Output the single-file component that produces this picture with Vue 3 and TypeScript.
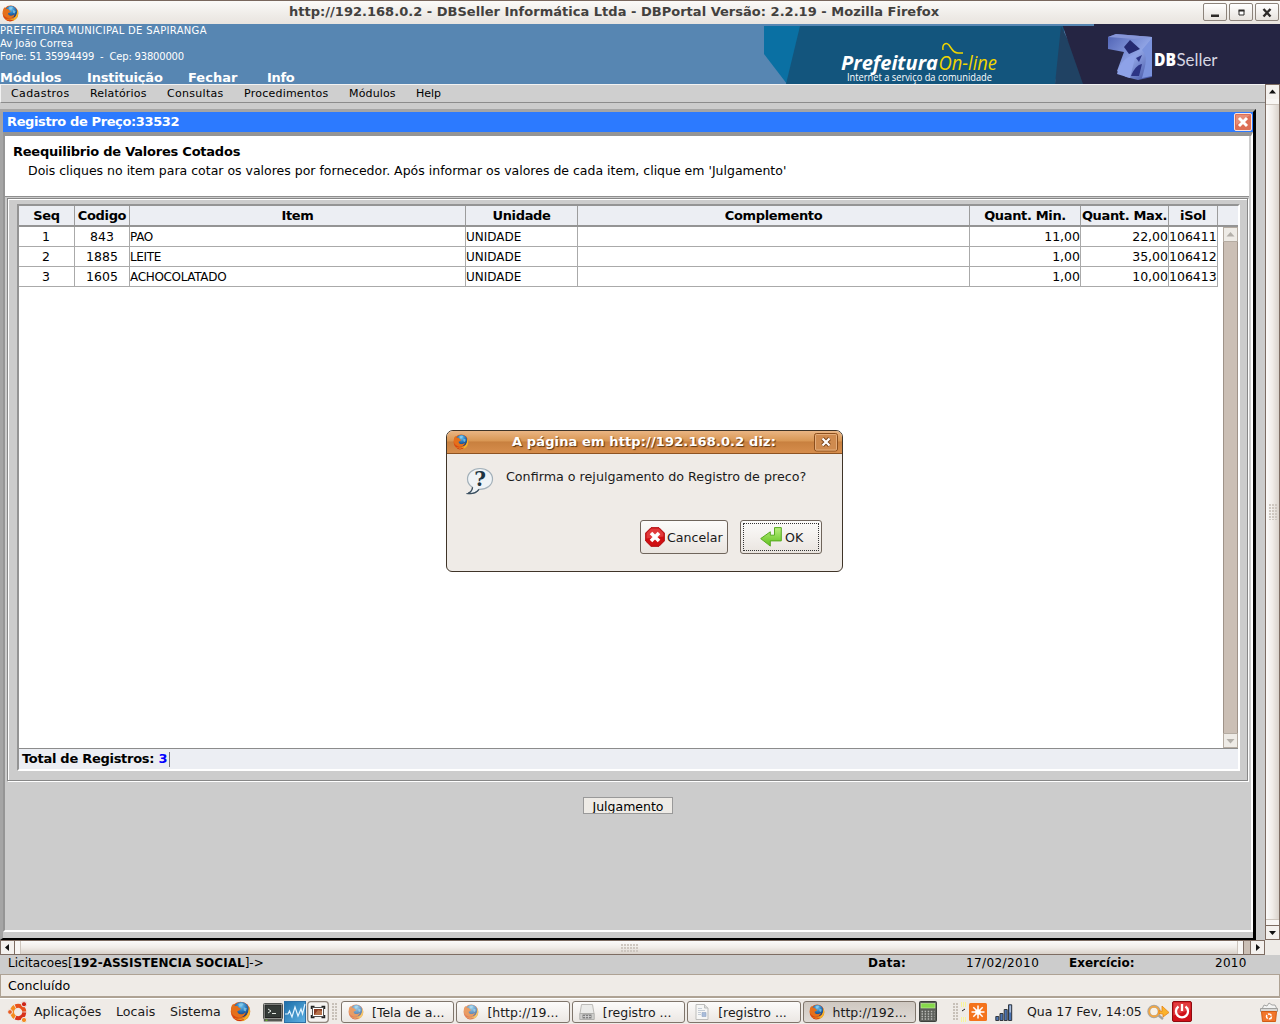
<script setup lang="ts">
interface Column { label: string; cls: string }
interface Row { seq: number; codigo: number; item: string; unidade: string; min: string; max: string; isol: string }
interface Task { label: string; icon: string; state: string }

const modules: string[] = ['Módulos', 'Instituição', 'Fechar', 'Info']
const menus: string[] = ['Cadastros', 'Relatórios', 'Consultas', 'Procedimentos', 'Módulos', 'Help']

const columns: Column[] = [
  { label: 'Seq', cls: 'h-seq' },
  { label: 'Codigo', cls: 'h-cod' },
  { label: 'Item', cls: 'h-item' },
  { label: 'Unidade', cls: 'h-uni' },
  { label: 'Complemento', cls: 'h-comp' },
  { label: 'Quant. Min.', cls: 'h-min' },
  { label: 'Quant. Max.', cls: 'h-max' },
  { label: 'iSol', cls: 'h-isol' },
]

const rows: Row[] = [
  { seq: 1, codigo: 843, item: 'PAO', unidade: 'UNIDADE', min: '11,00', max: '22,00', isol: '106411' },
  { seq: 2, codigo: 1885, item: 'LEITE', unidade: 'UNIDADE', min: '1,00', max: '35,00', isol: '106412' },
  { seq: 3, codigo: 1605, item: 'ACHOCOLATADO', unidade: 'UNIDADE', min: '1,00', max: '10,00', isol: '106413' },
]

const tasks: Task[] = [
  { label: '[Tela de a...', icon: '#i-firefox', state: 'faded' },
  { label: '[http://19...', icon: '#i-firefox', state: 'faded' },
  { label: '[registro ...', icon: '#i-drive', state: 'idle' },
  { label: '[registro ...', icon: '#i-doc', state: 'idle' },
  { label: 'http://192...', icon: '#i-firefox', state: 'active' },
]
</script>

<template>
  <div class="screen">
    <svg class="defs" width="0" height="0">
      <defs>
        <radialGradient id="g-globe" cx=".5" cy=".25" r=".7">
          <stop offset="0" stop-color="#6fc4ee" /><stop offset=".55" stop-color="#2471b4" /><stop offset="1" stop-color="#173a78" />
        </radialGradient>
        <linearGradient id="g-fox" x1="0" y1="0" x2="1" y2="1">
          <stop offset="0" stop-color="#e8701a" /><stop offset=".5" stop-color="#d8420f" /><stop offset="1" stop-color="#f5c22b" />
        </linearGradient>
        <linearGradient id="g-green" x1="0" y1="0" x2="0" y2="1">
          <stop offset="0" stop-color="#b9ee7c" /><stop offset="1" stop-color="#5fc11d" />
        </linearGradient>
        <linearGradient id="g-blue" x1="0" y1="0" x2="1" y2="1">
          <stop offset="0" stop-color="#1d6ea8" /><stop offset="1" stop-color="#5fb2e4" />
        </linearGradient>
        <linearGradient id="g-cube" x1="0" y1="0" x2="1" y2="1">
          <stop offset="0" stop-color="#4f62b4" /><stop offset=".55" stop-color="#8fa3e4" /><stop offset="1" stop-color="#3c4d9e" />
        </linearGradient>
        <symbol id="i-firefox" viewBox="0 0 20 20">
          <circle cx="10" cy="10" r="9.3" fill="url(#g-fox)" />
          <circle cx="10.6" cy="8.2" r="7.2" fill="url(#g-globe)" />
          <path d="M8 3c2-1.500 4-1 5 0l-2 2-2 .5zM13 6l3 1-1 3-2-1z" fill="#8fd0ee" opacity=".7" />
          <path d="M1 8C1 5 2 3.500 3.200 2.500l.8 2 3 .3 1.500 1.700 2 .6-1.500 1.800-2 .8c.2 2.600 2.800 3.600 6 2.400l2-1.300c-1 4-4 5-7 4.700C3.500 15 1 12 1 8z" fill="#e5701b" />
          <path d="M18 5c2 5 .7 10-3.500 12.500C11 20 5 19 3 15.500c4 3 9 2.500 12-.5 2.300-2.500 3-6 3-10z" fill="#f6b52c" />
          <path d="M3 15.500c3 3 8 3 11 1.500-2 2.600-8 3.200-11-1.500z" fill="#c92a12" />
        </symbol>
        <symbol id="i-drive" viewBox="0 0 16 16">
          <path d="M2.500.5h11l1.500 9H1z" fill="#ebebe9" stroke="#bcbbb8" />
          <path d="M.8 9.500h14.400v6H.8z" fill="#cfcfcd" stroke="#b0b0ad" />
          <path d="M3.500 10.500h9v4h-9z" fill="#808080" /><path d="M4 12.500h8M6.500 11v3.500M9.500 11v3.500" stroke="#d6d6d6" stroke-width=".8" />
        </symbol>
        <symbol id="i-doc" viewBox="0 0 16 16">
          <path d="M2 .5h8.500L14 4v11.500H2z" fill="#f6f6f5" stroke="#bdbdbb" /><path d="M10.500.5V4H14" fill="#ddd" stroke="#bdbdbb" />
          <path d="M4 4.500h4M4 6.500h7M4 8.500h3M4 10.500h3" stroke="#c5cdd6" /><path d="M8 8.500h4v4H8z" fill="#a9bddb" stroke="#92a5c2" stroke-width=".6" />
        </symbol>
      </defs>
    </svg>

    <!-- browser title bar -->
    <header class="titlebar">
      <svg class="fx16" width="17" height="17"><use href="#i-firefox" /></svg>
      <span class="title">http://192.168.0.2 - DBSeller Informática Ltda - DBPortal Versão: 2.2.19 - Mozilla Firefox</span>
      <div class="winbtns">
        <span class="wb"><svg width="22" height="17"><path d="M7 10.500h8v2.500H7z" fill="#2d2a28" /></svg></span>
        <span class="wb"><svg width="22" height="17"><path d="M9 6.500h5v4.500H9z" fill="#fff" stroke="#2d2a28" stroke-width="1" /><path d="M8.500 6.500h6" stroke="#2d2a28" stroke-width="2" /></svg></span>
        <span class="wb"><svg width="22" height="17"><path d="M7.500 5l7 7.500M14.500 5l-7 7.500" stroke="#2d2a28" stroke-width="2.400" /></svg></span>
      </div>
    </header>

    <!-- portal header -->
    <section class="portal">
      <div class="org">
        <div class="org-line l1">PREFEITURA MUNICIPAL DE SAPIRANGA</div>
        <div class="org-line l2">Av João Correa</div>
        <div class="org-line l3">Fone: 51 35994499 &nbsp;- &nbsp;Cep: 93800000</div>
        <nav class="mods"><span v-for="(m, i) in modules" :key="m" :class="'m' + i">{{ m }}</span></nav>
      </div>
      <svg class="banner" width="516" height="60" viewBox="0 0 516 60">
        <path d="M0 2h37L23 60 0 30z" fill="#0a70a3" />
        <path d="M36 2h265l-10 58H22z" fill="#13557d" />
        <path d="M297 2l-6 58h35z" fill="#204263" />
        <path d="M298 0h218v60H319z" fill="#252543" />
        <path d="M0 0h330v2H0z" fill="#5786b2" />
        <g>
          <path d="M344 13l8-3 36 3v40l-14 3-12-3-9-6 7-19-16-3z" fill="url(#g-cube)" />
          <path d="M344 13l8-3 36 3-18 2z" fill="#8796d8" />
          <path d="M360 23l6-7 10 9-11 5z" fill="#252a70" />
          <path d="M388 14v38l-10 2c4-14 6-22 0-28z" fill="#7b93dd" />
          <path d="M353 50c3-12 9-17 19-20l-6 24z" fill="#8ea2e8" />
          <path d="M367 52c3-7 6-11 11-12l-3 12zM372 34l6-3-3 7z" fill="#2c3485" />
        </g>
        <text x="390" y="42" class="db" textLength="22" lengthAdjust="spacingAndGlyphs">DB</text>
        <text x="412.5" y="42" class="seller" textLength="41" lengthAdjust="spacingAndGlyphs">Seller</text>
        <text x="77" y="45.5" class="pref" textLength="97" lengthAdjust="spacingAndGlyphs">Prefeitura</text>
        <text x="174.5" y="45.5" class="online" textLength="58.5" lengthAdjust="spacingAndGlyphs">On-line</text>
        <path d="M179 26c-1-6 3-8 6-5 3 4 4 8 9 8h5" fill="none" stroke="#f0d500" stroke-width="1.500" />
        <text x="83" y="57" class="slogan" textLength="145" lengthAdjust="spacingAndGlyphs">Internet a serviço da comunidade</text>
      </svg>
    </section>

    <div class="viewport">
      <div class="page">
        <nav class="menubar"><span v-for="(m, i) in menus" :key="m" :class="'n' + i">{{ m }}</span></nav>

        <main class="window">
          <div class="win-title">
            <span>Registro de Preço:33532</span>
            <svg width="18" height="18" viewBox="0 0 18 18"><rect x=".5" y=".5" width="17" height="17" rx="1.500" fill="#dd6f56" stroke="#fbe4dc" /><path d="M2 2h14l-14 10z" fill="#eda48f" opacity=".6" /><path d="M5 5l8 8M13 5l-8 8" stroke="#fff" stroke-width="3" /></svg>
          </div>
          <div class="win-body">
            <div class="intro">
              <h1>Reequilibrio de Valores Cotados</h1>
              <p>Dois cliques no item para cotar os valores por fornecedor. Após informar os valores de cada item, clique em 'Julgamento'</p>
            </div>
            <div class="fieldset">
              <div class="grid">
                <div class="ghead">
                  <span v-for="c in columns" :key="c.label" class="cell" :class="c.cls"><b>{{ c.label }}</b></span>
                </div>
                <div class="gbody">
                  <div class="grows">
                    <div v-for="r in rows" :key="r.seq" class="grow">
                      <span class="cell h-seq num">{{ r.seq }}</span>
                      <span class="cell h-cod num">{{ r.codigo }}</span>
                      <span class="cell h-item left name">{{ r.item }}</span>
                      <span class="cell h-uni left">{{ r.unidade }}</span>
                      <span class="cell h-comp"></span>
                      <span class="cell h-min right num">{{ r.min }}</span>
                      <span class="cell h-max right num">{{ r.max }}</span>
                      <span class="cell h-isol left num">{{ r.isol }}</span>
                    </div>
                  </div>
                  <div class="gscroll">
                    <svg width="15" height="15"><rect x=".5" y=".5" width="14" height="14" fill="#eeebe6" stroke="#b5aca2" /><path d="M3.500 9.500h8L7.500 5z" fill="#b3afa9" /></svg>
                    <div class="gtrack"></div>
                    <svg width="15" height="15"><rect x=".5" y=".5" width="14" height="14" fill="#eeebe6" stroke="#b5aca2" /><path d="M3.500 6h8L7.500 10.500z" fill="#b3afa9" /></svg>
                  </div>
                </div>
                <div class="gfoot"><b>Total de Registros: <i>3</i></b><span class="caret"></span></div>
              </div>
            </div>
            <button class="julg">Julgamento</button>
          </div>
        </main>
      </div>

      <div class="vscroll">
        <svg width="15" height="15"><rect x=".5" y=".5" width="14" height="15" fill="#f4f1ee" stroke="#7d6c62" /><path d="M4 9.500h7L7.500 5.500z" fill="#111" /></svg>
        <div class="vthumb"><span class="vend"></span><span class="vgrip"></span><span class="vend bottom"></span></div>
        <svg width="15" height="15"><rect x=".5" y=".5" width="14" height="14" fill="#f4f1ee" stroke="#7d6c62" /><path d="M4 6h7L7.500 10z" fill="#111" /></svg>
      </div>
    </div>

    <div class="hscroll">
      <svg width="15" height="15"><rect x=".5" y=".5" width="14" height="14" fill="#f4f1ee" stroke="#7d6c62" /><path d="M9 4v7L5 7.500z" fill="#111" /></svg>
      <div class="hthumb"><span class="hend"></span><span class="hgrip"></span><span class="hend r"></span></div>
      <div class="htrack"></div>
      <svg width="15" height="15"><rect x=".5" y=".5" width="14" height="14" fill="#f4f1ee" stroke="#7d6c62" /><path d="M6 4v7L10 7.500z" fill="#111" /></svg>
      <div class="corner"></div>
    </div>

    <div class="infobar">
      <span class="path">Licitacoes[<b>192-ASSISTENCIA SOCIAL</b>]-&gt;</span>
      <b class="k-data">Data:</b><span class="v-data">17/02/2010</span>
      <b class="k-ex">Exercício:</b><span class="v-ex">2010</span>
    </div>

    <div class="statusbar">Concluído</div>

    <!-- desktop panel -->
    <footer class="panel">
      <svg class="ubuntu" width="22" height="22" viewBox="0 0 22 22">
        <g fill="none" stroke-width="4">
          <path d="M8.500 5.400A6.200 6.200 0 0 1 17.300 10.600" stroke="#e8501c" /><path d="M17.300 11.400A6.200 6.200 0 0 1 8.500 16.600" stroke="#d8321a" /><path d="M7.800 16.200A6.200 6.200 0 0 1 7.800 5.800" stroke="#f58a1f" />
        </g>
        <circle cx="3" cy="11" r="2.400" fill="#e95a20" stroke="#efebe7" /><circle cx="17" cy="3.200" r="2.600" fill="#cd2418" stroke="#efebe7" /><circle cx="17" cy="19" r="2.600" fill="#f48a22" stroke="#efebe7" />
      </svg>
      <span class="pm p0">Aplicações</span><span class="pm p1">Locais</span><span class="pm p2">Sistema</span>
      <svg class="fx20" width="21" height="21"><use href="#i-firefox" /></svg>
      <svg class="q-term" width="20" height="19" viewBox="0 0 20 19"><rect x=".5" y=".5" width="19" height="15.500" rx="1" fill="#d6d8d3" stroke="#50524f" /><rect x="2" y="2" width="16" height="12.500" fill="#343a37" stroke="#222" /><path d="M5 6l3 2-3 2M9 10.500h4" stroke="#e6ece6" fill="none" /><path d="M.8 16h18.400v2.500H.8z" fill="#555753" /><path d="M2.500 17.200h2" stroke="#73d216" /></svg>
      <svg class="q-mon" width="22" height="22" viewBox="0 0 22 22"><rect x=".5" y=".5" width="21" height="21" fill="url(#g-blue)" stroke="#2c6fa5" /><path d="M1 13h3l1.500-3 2.500 6 3-10 3 9 3-7 1.500 5 2.500-10" fill="none" stroke="#e4f4ff" stroke-width="1.200" /></svg>
      <svg class="q-shot" width="22" height="22" viewBox="0 0 22 22"><rect x=".7" y=".7" width="20.600" height="20.600" rx="3" fill="#f5f3f1" stroke="#8f857c" stroke-width="1.300" /><path d="M4.500 8V5.500h3M14.500 5.500h3V8M4.500 14v2.500h3M14.500 16.500h3V14" fill="none" stroke="#222" stroke-width="1.500" /><rect x="5.500" y="6.500" width="11" height="9" fill="#fff" stroke="#555" /><rect x="7" y="8" width="8" height="6" fill="#8a3b22" /><path d="M7 14l4-5 4 1v4z" fill="#b5714b" /></svg>
      <span class="grip g1"></span>
      <div class="tasks">
        <div v-for="(t, i) in tasks" :key="i" class="task" :class="t.state">
          <svg width="16" height="16"><use :href="t.icon" /></svg><span>{{ t.label }}</span>
        </div>
      </div>
      <svg class="calc" width="20" height="22" viewBox="0 0 20 22"><rect x="1.500" y=".5" width="17" height="20" rx="1" fill="#5c5e59" stroke="#3e403c" /><rect x="3" y="2.500" width="14" height="4.500" fill="#86d94a" stroke="#c7f2a0" stroke-width=".6" /><g stroke="#b9bab6" stroke-width="1.300" stroke-dasharray="1.500 1.600"><path d="M3.500 10.500h13M3.500 13h13M3.500 15.500h13M3.500 18h13" /></g></svg>
      <span class="grip g2"></span>
      <svg class="net" width="5" height="20" viewBox="0 0 5 20"><path d="M.5 0v5M2.500 0v5M4.500 0v5M.5 15v5M2.500 15v5M4.500 15v5" stroke="#f8f49a" /><path d="M1 9l3-2" stroke="#222" /></svg>
      <svg class="upd" width="18" height="18" viewBox="0 0 18 18"><rect width="18" height="18" rx="1.500" fill="#f4731c" /><path d="M9 2.500v13M2.500 9h13M4.300 4.300l9.400 9.400M13.700 4.300l-9.400 9.400" stroke="#fff" stroke-width="1.500" /><circle cx="9" cy="9" r="2.800" fill="#fff" /></svg>
      <svg class="sig" width="18" height="17" viewBox="0 0 18 17"><g fill="#4a73b3" stroke="#33383f"><path d="M.8 12.500h3v4h-3zM5 9.500h3v7H5zM9.200 5.500h3v11h-3zM13.500.8h3.200v15.700h-3.200z" /></g><path d="M14.500 1.500h1.500v7h-1.500z" fill="#a9bddb" /></svg>
      <span class="clock">Qua 17 Fev, 14:05</span>
      <svg class="key" width="23" height="16" viewBox="0 0 23 16"><path d="M11 11l5 4" stroke="#a5a19a" stroke-width="2.500" /><circle cx="7" cy="7.500" r="5.200" fill="#f8f1e6" stroke="#aba69e" stroke-width="3" /><circle cx="7" cy="7.500" r="4.900" fill="none" stroke="#f7a63c" stroke-width="1.600" /><path d="M12 6.500l3 1V2l7 6.500-6 4.500v-3l-4-.5z" fill="#fbb32b" stroke="#e78311" stroke-width=".8" /></svg>
      <svg class="power" width="20" height="21" viewBox="0 0 20 21"><rect x=".5" y=".5" width="19" height="20" rx="1.500" fill="#d01018" stroke="#8f0b10" /><path d="M1.500 1.500h17v7l-17 6z" fill="#ec5a5a" opacity=".6" /><path d="M6.500 5.500a6 6 0 1 0 7 0M10 3v7" fill="none" stroke="#fff" stroke-width="2.300" /></svg>
      <svg class="trash" width="18" height="20" viewBox="0 0 18 20"><path d="M2 7l2-4 3 1 2-3 3 2 3 0 2 4z" fill="#f3f3f2" stroke="#a5a5a3" /><path d="M.5 6.500h17v3H.5z" fill="#d7d7d5" stroke="#a0a09e" /><path d="M1.500 9.500h15L15.500 19.500h-13z" fill="#f2762b" stroke="#d15c15" /><circle cx="9" cy="14.500" r="2.500" fill="none" stroke="#fff" stroke-width="1.500" stroke-dasharray="4 1.200" /></svg>
    </footer>

    <!-- confirmation dialog -->
    <div class="dialog">
      <div class="d-title">
        <svg width="16" height="16"><use href="#i-firefox" /></svg>
        <span>A página em http://192.168.0.2 diz:</span>
        <svg class="d-close" width="24" height="19" viewBox="0 0 24 19"><rect x=".5" y=".5" width="23" height="17.500" rx="2" fill="#cf8b4f" stroke="#8a4e1d" /><rect x="1.500" y="1.500" width="21" height="15.500" rx="1" fill="none" stroke="#e5ae7c" /><path d="M8.500 5.500l7 7M15.500 5.500l-7 7" stroke="#7a441a" stroke-width="4" /><path d="M8.500 5.500l7 7M15.500 5.500l-7 7" stroke="#fff" stroke-width="2.200" /></svg>
      </div>
      <div class="d-msg">
        <svg width="28" height="29" viewBox="0 0 28 29">
          <path d="M14 1.500C7 1.500 1.500 6 1.500 12c0 3.500 2 6.500 5 8.300C6.500 23 5 25 2 26.500c5 .5 9-1.500 11-4.200 8 .3 13.500-4.300 13.500-10.300S21 1.500 14 1.500z" fill="#eff3f6" stroke="#a3b0b9" stroke-width="1.200" />
          <path d="M6.500 20.300C6.500 23 5 25 2 26.500c5 .5 9-1.500 11-4.200" fill="none" stroke="#3c5060" stroke-width="1.300" />
          <text x="14" y="19" class="qm">?</text>
        </svg>
        <p>Confirma o rejulgamento do Registro de preco?</p>
      </div>
      <div class="d-btns">
        <button class="d-btn cancel">
          <svg width="20" height="20" viewBox="0 0 20 20"><path d="M6 .7h8L19.300 6v8L14 19.300H6L.7 14V6z" fill="#d00f13" stroke="#b00509" /><path d="M6.300 1.500h7.400L18.500 6.300v3.200l-17 2V6.300z" fill="#e95152" opacity=".65" /><path d="M6 6l8 8M14 6l-8 8" stroke="#fff" stroke-width="3.600" /></svg>
          <span>Cancelar</span>
        </button>
        <button class="d-btn ok">
          <svg width="22" height="20" viewBox="0 0 22 20"><path d="M14.500.6h6.800v13.300h-11v5.200L.7 11.600l9.600-6.800v3.400h4.200z" fill="url(#g-green)" stroke="#58aa22" stroke-linejoin="round" /></svg>
          <span>OK</span>
        </button>
      </div>
    </div>
  </div>
</template>

<style>
html, body { margin: 0; overflow: hidden; }
</style>

<style scoped>
.screen { position: relative; width: 1280px; height: 1024px; overflow: hidden; display: flex; flex-direction: column; background: #ccc; color: #000; font: 13px/16px "DejaVu Sans", sans-serif; }
.screen * { box-sizing: border-box; }
svg { display: block; flex: none; }
.defs { position: absolute; }
span, b, p, h1, div { white-space: nowrap; }

.titlebar { height: 24px; flex: none; display: flex; align-items: flex-start; border-top: 1px solid #79675d; background: linear-gradient(#fbfaf8, #efece8 60%, #e9e4df); padding: 0 1px 0 2px; }
.fx16 { margin-top: 4px; }
.title { flex: 1; margin-left: 270px; margin-top: 3px; font-weight: bold; font-size: 13px; letter-spacing: 0.020px; color: #43413e; }
.winbtns { display: flex; gap: 2px; margin-top: 2px; }
.wb { width: 24px; height: 18px; border: 1px solid #8c837b; border-radius: 2px; background: linear-gradient(#fff, #e7e3de); }

.portal { height: 60px; flex: none; display: flex; justify-content: space-between; background: #5786b2; color: #fff; }
.org-line { font-size: 10px; line-height: 13px; }
.l1 { letter-spacing: 0.310px; }
.l3 { letter-spacing: -0.190px; }
.mods { display: flex; font-weight: bold; font-size: 13px; line-height: 16px; margin-top: 7px; }
.m0 { width: 87px; } .m1 { width: 101px; letter-spacing: -0.200px; } .m2 { width: 79px; } .m3 { letter-spacing: -0.300px; }
.banner text { font-family: "Open Sans", sans-serif; fill: #fff; }
.banner .db { font-size: 18px; font-weight: 800; }
.banner .seller { font-family: Lato, sans-serif; font-size: 18px; font-weight: 400; fill: #d6d6e2; }
.banner .pref { font-size: 20px; font-weight: 700; font-style: italic; }
.banner .online { font-size: 20px; font-style: italic; fill: #f0d500; }
.banner .slogan { font-size: 10px; }

.viewport { height: 856px; flex: none; display: flex; }
.page { width: 1265px; display: flex; flex-direction: column; background: #ccc; }
.menubar { height: 19px; flex: none; display: flex; font-size: 11px; line-height: 17px; background: #cfcfcf; border: 1px solid #f2f2f2; border-right: 0; border-bottom-color: #8c8c8c; padding-left: 10px; }
.n0 { width: 79px; letter-spacing: 0.400px; } .n1 { width: 77px; letter-spacing: 0.180px; } .n2 { width: 77px; letter-spacing: 0.300px; }
.n3 { width: 105px; letter-spacing: 0.230px; } .n4 { width: 67px; letter-spacing: 0.150px; }
.window { width: 1256px; height: 831px; margin-top: 6px; display: flex; flex-direction: column; border: 3px solid; border-color: #a5a5a5 #000 #000 #a5a5a5; border-bottom-width: 2px; }
.win-title { height: 20px; flex: none; display: flex; justify-content: space-between; align-items: center; background: #2c7aff; color: #fff; font-weight: bold; letter-spacing: -0.380px; padding: 0 1px 0 4px; }
.win-body { height: 800px; flex: none; display: flex; flex-direction: column; border: 2px solid; border-color: #959595 #fff #fff #959595; border-top-width: 4px; background: #ccc; }
.intro { width: 1244px; height: 61px; flex: none; background: #fff; border-bottom: 1px solid #8f8f8f; padding: 7px 8px 0; }
.intro h1 { margin: 0; font-size: 13px; line-height: 17px; font-weight: bold; letter-spacing: -0.230px; }
.intro p { margin: 3px 0 0 15px; font-size: 12.500px; line-height: 15px; }
.fieldset { width: 1241px; height: 583px; flex: none; margin: 1px 0 0 2px; border: 1px solid #888; box-shadow: inset 1px 1px 0 #fff, 1px 1px 0 #fff; padding: 5px 8px 0 9px; }
.grid { width: 1223px; height: 567px; display: flex; flex-direction: column; border: 2px solid; border-color: #949494 #fff #fff #949494; background: #fff; }
.ghead { height: 21px; flex: none; display: flex; background: #eceef3; border-bottom: 2px solid #949494; letter-spacing: -0.350px; }
.cell { flex: none; overflow: hidden; text-align: center; border-right: 1px solid #9c9c9c; height: 100%; }
.ghead .cell { line-height: 19px; }
.h-seq { width: 56px; } .h-cod { width: 55px; } .h-item { width: 336px; } .h-uni { width: 112px; } .h-comp { width: 392px; }
.h-min { width: 111px; } .h-max { width: 88px; } .h-isol { width: 49px; }
.gbody { flex: 1; display: flex; justify-content: space-between; }
.grows { width: 1199px; }
.grow { height: 20px; display: flex; border-bottom: 1px solid #aaa; font-size: 12px; line-height: 21px; }
.grow .cell { border-color: #aaa; }
.grow .h-seq { padding-right: 1px; }
.grow .num { font-size: 12.500px; line-height: 19px; }
.name { letter-spacing: -0.330px; }
.left { text-align: left; } .right { text-align: right; }
.gscroll { width: 15px; display: flex; flex-direction: column; }
.gtrack { flex: 1; background: #cbbfb5; border: solid #9f9389; border-width: 0 1px; }
.gfoot { height: 21px; flex: none; display: flex; align-items: center; background: #eceef3; border-top: 1px solid #8c8c8c; padding-left: 3px; letter-spacing: -0.280px; }
.gfoot i { color: #00f; font-style: normal; }
.caret { width: 1px; height: 15px; background: #777; margin-left: 2px; }
.julg { width: 90px; height: 17px; margin: 16px 0 0 578px; padding: 1px 0 0; flex: none; border: 1px solid #999; background: #eeebe6; font: 12.500px/15px "DejaVu Sans", sans-serif; overflow: hidden; color: #000; }

.vscroll { width: 15px; display: flex; flex-direction: column; }
.vthumb { flex: 1; display: flex; flex-direction: column; justify-content: space-between; align-items: center; border: solid #7d6c62; border-width: 0 1px; background: linear-gradient(90deg, #fcfbfa, #f0ece8 50%, #d9d2cb); }
.vend { width: 100%; height: 6px; background: #f8f6f4; border-bottom: 1px solid #cdc5bd; }
.vend.bottom { border-bottom: 0; border-top: 1px solid #cdc5bd; }
.vgrip { width: 8px; height: 16px; background: radial-gradient(circle at 1px 1px, #cdc6bf 0.700px, transparent 1px) 0 0 / 3px 3px; }
.hscroll { height: 15px; flex: none; display: flex; background: #eeebe7; }
.hthumb { width: 1229px; display: flex; justify-content: space-between; align-items: center; border: solid #7d6c62; border-width: 1px 1px 1px 0; background: linear-gradient(#fcfbfa, #f0ece8 50%, #d9d2cb); }
.hend { width: 6px; height: 100%; background: #f8f6f4; border-right: 1px solid #cdc5bd; }
.hend.r { border-right: 0; border-left: 1px solid #cdc5bd; }
.hgrip { width: 17px; height: 8px; background: radial-gradient(circle at 1px 1px, #cdc6bf 0.700px, transparent 1px) 0 0 / 3px 3px; }
.htrack { width: 6px; background: #cbbfb5; border: solid #7d6c62; border-width: 1px 0; }
.corner { flex: 1; }

.infobar { height: 19px; flex: none; display: flex; font-size: 12px; line-height: 16px; padding-left: 8px; background: #ccc; }
.path { width: 860px; letter-spacing: 0.030px; }
.k-data { width: 98px; letter-spacing: 0.300px; } .v-data { width: 103px; letter-spacing: 0.400px; } .k-ex { width: 146px; } .v-ex { letter-spacing: 0.300px; }
.statusbar { height: 24px; flex: none; border: 1px solid #aea294; border-bottom-width: 2px; background: #efebe7; padding-left: 7px; font-size: 12.600px; line-height: 22px; }

.panel { height: 26px; flex: none; display: flex; align-items: flex-start; border-top: 1px solid #fff; background: #efebe7; color: #1a1a1a; font-size: 12.600px; line-height: 26px; }
.ubuntu { margin: 2px 0 0 7px; }
.p0 { margin-left: 5px; width: 82px; } .p1 { width: 54px; } .p2 { width: 60px; }
.fx20 { margin-top: 2px; }
.q-term { margin: 4px 0 0 12px; } .q-mon { margin: 2px 0 0 1px; } .q-shot { margin: 2px 0 0 1px; }
.grip { flex: none; width: 6px; height: 18px; margin-top: 4px; background: radial-gradient(circle at 1px 1px, #c6bfb8 0.700px, transparent 1px) 0 0 / 3px 3px; }
.g1 { margin-left: 3px; }
.tasks { display: flex; gap: 2px; margin: 2px 0 0 3px; }
.task { width: 113.400px; height: 22px; flex: none; display: flex; align-items: center; gap: 8px; padding-left: 6px; border: 1px solid #7f756b; border-radius: 3px; background: linear-gradient(#fcfbfa, #ebe7e3); font-size: 12.500px; line-height: 21px; }
.faded svg { opacity: .65; }
.task.active { background: linear-gradient(#cfc8c1, #dfdad5); padding-left: 5px; }
.calc { margin: 2px 0 0 2px; }
.g2 { margin-left: 15px; }
.net { margin: 3px 0 0 2px; } .upd { margin: 4px 0 0 3px; } .sig { margin: 5px 0 0 8px; }
.clock { margin-left: 14px; width: 119px; font-size: 12.500px; }
.key { margin: 5px 0 0 1px; } .power { margin: 2px 0 0 2px; } .trash { margin: 3px 0 0 68px; }

.dialog { position: absolute; left: 446px; top: 430px; width: 397px; height: 142px; border: 1px solid #3f3428; border-radius: 7px 7px 6px 6px; background: #efebe7; overflow: hidden; }
.d-title { height: 23px; display: flex; align-items: center; border-bottom: 1px solid #8d5322; background: linear-gradient(#eab583, #d99754 45%, #c8803f 50%, #d68d4c); color: #fff; font-weight: bold; letter-spacing: 0.120px; padding: 0 4px 0 6px; text-shadow: 1px 1px 1px #5a3413; }
.d-title span { flex: 1; margin-left: 43px; }
.d-msg { display: flex; height: 66px; padding: 13px 0 0 19px; }
.d-msg p { margin: 2px 0 0 12px; font-size: 12.700px; color: #1a1a1a; }
.qm { font: bold 20px "DejaVu Serif", serif; fill: #1e3442; text-anchor: middle; }
.d-btns { display: flex; gap: 12px; padding-left: 193px; }
.d-btn { height: 34px; display: flex; align-items: center; border: 1px solid #6f655c; border-radius: 3px; background: linear-gradient(#fcfbfa, #f3f0ed 50%, #e9e4df); font: 12.600px "DejaVu Sans", sans-serif; color: #1a1a1a; padding: 0 4px; }
.cancel { width: 88px; gap: 2px; }
.ok { width: 82px; gap: 3px; padding-left: 19px; outline: 1px dotted #333; outline-offset: -4px; }
</style>
